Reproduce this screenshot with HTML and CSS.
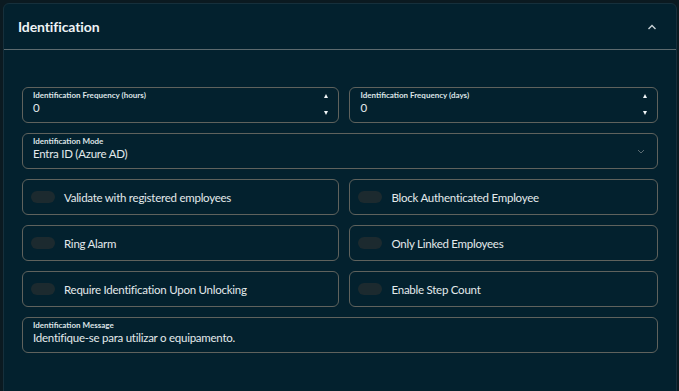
FILE: index.html
```html
<!DOCTYPE html>
<html>
    <head>
        <title>Identification settings</title>
        <link rel="stylesheet" href="styles.css">
    </head>
    <body>
        <div class="panel">
            <div class="panel-header">
                <h2 class="panel-title">Identification</h2>
                <svg class="collapse" width="10" height="6" viewBox="0 0 10 6">
                    <path d="M1.5 5 L5 1.5 L8.5 5" fill="none" stroke="#c9d2d6" stroke-width="1.4"/>
                </svg>
            </div>
            <div class="panel-body">
                <div class="form-grid">
                    <div class="field">
                        <div class="field-main">
                            <div class="field-label">Identification Frequency (hours)</div>
                            <div class="field-value">0</div>
                        </div>
                        <div class="spinner">
                            <span class="arrow up"></span>
                            <span class="arrow down"></span>
                        </div>
                    </div>
                    <div class="field">
                        <div class="field-main">
                            <div class="field-label">Identification Frequency (days)</div>
                            <div class="field-value">0</div>
                        </div>
                        <div class="spinner">
                            <span class="arrow up"></span>
                            <span class="arrow down"></span>
                        </div>
                    </div>
                    <div class="field wide">
                        <div class="field-main">
                            <div class="field-label">Identification Mode</div>
                            <div class="field-value">Entra ID (Azure AD)</div>
                        </div>
                        <svg class="select-chevron" width="8" height="5" viewBox="0 0 8 5">
                            <path d="M1 1 L4 4 L7 1" fill="none" stroke="#5b6b72" stroke-width="1"/>
                        </svg>
                    </div>
                    <div class="switch-field">
                        <span class="toggle"></span>
                        <span class="switch-text">Validate with registered employees</span>
                    </div>
                    <div class="switch-field">
                        <span class="toggle"></span>
                        <span class="switch-text">Block Authenticated Employee</span>
                    </div>
                    <div class="switch-field">
                        <span class="toggle"></span>
                        <span class="switch-text">Ring Alarm</span>
                    </div>
                    <div class="switch-field">
                        <span class="toggle"></span>
                        <span class="switch-text">Only Linked Employees</span>
                    </div>
                    <div class="switch-field">
                        <span class="toggle"></span>
                        <span class="switch-text">Require Identification Upon Unlocking</span>
                    </div>
                    <div class="switch-field">
                        <span class="toggle"></span>
                        <span class="switch-text">Enable Step Count</span>
                    </div>
                    <div class="field wide">
                        <div class="field-main">
                            <div class="field-label">Identification Message</div>
                            <div class="field-value">Identifique-se para utilizar o equipamento.</div>
                        </div>
                    </div>
                </div>
            </div>
        </div>
    </body>
</html>
```

FILE: styles.css
```css
body {
    margin: 0;
    background: #0b1a21;
    font-family: Lato, "Noto Sans", sans-serif;
    color: #e4eaec;
    overflow: hidden;
}
.panel {
    margin: 3px 0 0 3px;
    width: 672px;
    min-height: 400px;
    background: #03212e;
    border: 1px solid #16303c;
    border-radius: 6px;
}
.panel-header {
    height: 45px;
    display: flex;
    align-items: center;
    justify-content: space-between;
    padding: 0 19px 0 14px;
    border-bottom: 1px solid #5d6a6e;
}
.panel-title {
    margin: 0;
    font-size: 14px;
    font-weight: 700;
    letter-spacing: -0.1px;
    color: #eef3f5;
}
.collapse {
    display: block;
}
.panel-body {
    padding: 37px 18px 20px 18px;
}
.form-grid {
    display: grid;
    grid-template-columns: 318fr 309fr;
    column-gap: 10px;
    row-gap: 10px;
}
.field, .switch-field {
    height: 34px;
    border: 1px solid #5f625d;
    border-radius: 6px;
    display: flex;
    align-items: center;
}
.field {
    padding: 0 10px;
    align-items: stretch;
}
.field.wide {
    grid-column: span 2;
}
.field-main {
    flex: 1;
    padding-top: 2px;
}
.field-label {
    font-size: 8px;
    font-weight: 700;
    line-height: 10px;
    color: #dde4e7;
}
.field-value {
    font-size: 11.5px;
    line-height: 16px;
    letter-spacing: -0.25px;
}
.spinner {
    display: flex;
    flex-direction: column;
    justify-content: space-between;
    padding: 6px 0 7px 0;
}
.arrow {
    width: 0;
    height: 0;
    border-left: 2.5px solid transparent;
    border-right: 2.5px solid transparent;
}
.arrow.up {
    border-bottom: 4px solid #f2f6f8;
}
.arrow.down {
    border-top: 4px solid #f2f6f8;
}
.select-chevron {
    align-self: center;
    margin-right: 2px;
}
.switch-field {
    padding: 0 8px;
    gap: 9px;
}
.toggle {
    width: 24px;
    height: 12px;
    border-radius: 6px;
    background: #1c2a2f;
}
.switch-text {
    font-size: 11.5px;
    letter-spacing: -0.25px;
    color: #e4eaec;
}
```
